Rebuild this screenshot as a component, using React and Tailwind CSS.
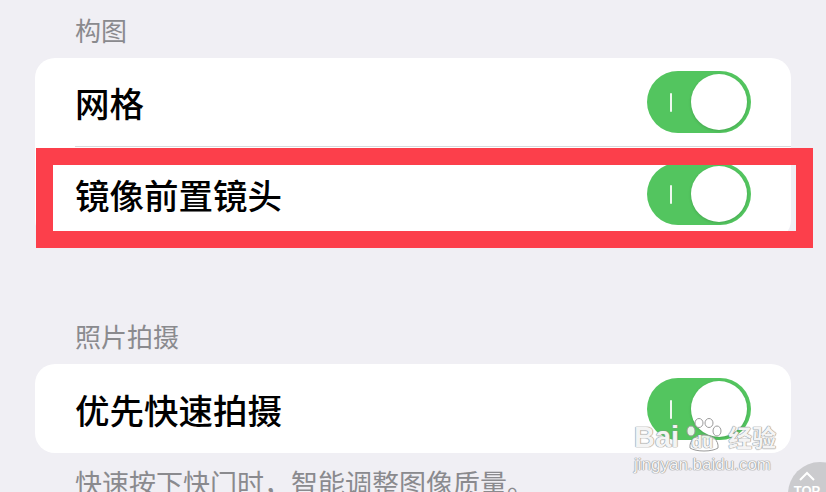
import React from 'react';

const font = { fontFamily: '"Noto Sans CJK SC", "Noto Sans", sans-serif' };
const latin = { fontFamily: 'Arial, "Liberation Sans", sans-serif' };

function Toggle() {
  return (
    <div className="relative w-[104px] h-[62px] rounded-full bg-[#53c55f] shrink-0">
      <div className="absolute left-[23px] top-[22px] w-[2px] h-[19px] bg-white/90 rounded-full" />
      <div className="absolute right-[4px] top-[3px] w-[56px] h-[56px] rounded-full bg-white shadow-[0_1px_3px_rgba(0,0,0,0.15)]" />
    </div>
  );
}

function Row({ label, className = '' }) {
  return (
    <div className={`flex items-center justify-between pl-[40px] pr-[40px] ${className}`}>
      <span className="text-[34.5px] leading-[34px] font-medium text-black">{label}</span>
      <Toggle />
    </div>
  );
}

function Watermark() {
  const outline = '[text-shadow:0_0_1px_#8f8f8f,0_0_1px_#8f8f8f,0_0_1px_#8f8f8f]';
  return (
    <div className="absolute left-[634px] top-[418px] pointer-events-none whitespace-nowrap">
      <div className="flex items-end h-[34px]">
        <span className={`text-[29px] leading-[29px] font-bold text-white/90 ${outline}`} style={latin}>Bai</span>
        <div className="relative w-[46px] h-[34px] ml-[3px] shrink-0">
          <svg width="46" height="34" viewBox="0 0 46 34" className="absolute left-0 top-0">
            <g fill="rgba(255,255,255,0.85)" stroke="#9a9a9a" strokeWidth="1">
              <ellipse cx="9" cy="13" rx="4" ry="5" />
              <ellipse cx="17" cy="5" rx="4" ry="4.5" />
              <ellipse cx="27" cy="5" rx="4" ry="4.5" />
              <ellipse cx="35" cy="13" rx="4" ry="5" />
              <path d="M8 30 C7 22 14 17 22 17 C30 17 37 22 36 30 C30 34 14 34 8 30 Z" />
            </g>
          </svg>
          <span className={`absolute left-[9px] top-[15px] text-[18px] leading-[18px] font-bold text-white/90 ${outline}`} style={latin}>du</span>
        </div>
        <span className={`shrink-0 text-[24px] leading-[30px] font-bold text-white/90 ${outline}`} style={font}>经验</span>
      </div>
      <div className={`text-[17px] leading-[20px] mt-[3px] text-white/90 ${outline}`} style={latin}>
        jingyan.baidu.com
      </div>
    </div>
  );
}

export default function App() {
  return (
    <div className="relative w-[826px] h-[492px] overflow-hidden bg-[#f0eff4]" style={font}>
      <div className="px-[35px] pt-[17px]">
        <div className="pl-[40px] text-[26px] leading-[25px] text-[#8a8a8e]">构图</div>

        <div className="mt-[16px] bg-white rounded-[20px] overflow-hidden">
          <Row label="网格" className="h-[88px]" />
          <div className="ml-[40px] h-px bg-[#d8d8dc]" />
          <Row label="镜像前置镜头" className="h-[93px]" />
        </div>

        <div className="mt-[83px] pl-[40px] text-[26px] leading-[25px] text-[#8a8a8e]">照片拍摄</div>

        <div className="mt-[16px] bg-white rounded-[20px] overflow-hidden">
          <Row label="优先快速拍摄" className="h-[89px]" />
        </div>

        <div className="mt-[17px] pl-[40px] text-[27px] leading-[26px] text-[#8a8a8e] whitespace-nowrap">
          快速按下快门时，智能调整图像质量。
        </div>
      </div>

      {/* red annotation box */}
      <div className="absolute left-[36px] top-[148px] w-[777px] h-[100px] border-[17px] border-[#fc3f4b]" />

      <Watermark />

      {/* back to top button */}
      <div className="absolute left-[788px] top-[462px] w-[64px] h-[64px] rounded-full bg-[#c6c6ca]/90 flex flex-col items-center pt-[8px] text-white" style={latin}>
        <svg width="20" height="12" viewBox="0 0 20 12" className="ml-[-26px]">
          <path d="M3 10 L10 3 L17 10" fill="none" stroke="white" strokeWidth="2" />
        </svg>
        <span className="text-[13px] font-bold leading-none mt-[2px] ml-[-26px]">TOP</span>
      </div>
    </div>
  );
}
